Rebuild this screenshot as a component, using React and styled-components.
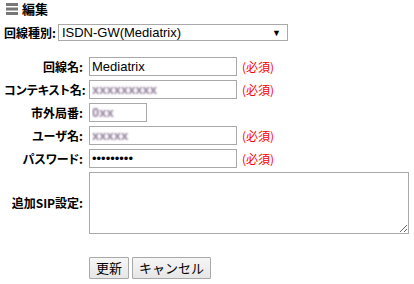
import React from 'react';
import styled, { createGlobalStyle } from 'styled-components';

const GlobalStyle = createGlobalStyle`
  body {
    margin: 0;
    background: #fff;
    font-family: "Noto Sans CJK JP", "Liberation Sans", sans-serif;
    font-feature-settings: "palt";
    color: #000;
  }
`;

const Page = styled.div`
  padding: 1px 4px 0;
`;

const Header = styled.div`
  display: flex;
  align-items: center;
  gap: 4px;
  height: 16px;
  padding-left: 2px;
`;

const Title = styled.span`
  font-size: 13px;
  font-weight: bold;
  line-height: 16px;
`;

const TypeRow = styled.div`
  display: flex;
  align-items: center;
  gap: 2px;
  margin-top: 7px;
`;

const Label = styled.label`
  font-size: 12px;
  font-weight: bold;
  line-height: 16px;
  white-space: nowrap;
  text-align: ${props => (props.right ? 'right' : 'left')};
`;

const Select = styled.div`
  box-sizing: border-box;
  width: 230px;
  height: 17px;
  border: 1px solid #a9a9a9;
  display: flex;
  align-items: center;
  justify-content: space-between;
  padding: 0 6px 0 3px;
  font-family: "Liberation Sans", Arial, sans-serif;
  font-size: 13px;
  background: #fff;
`;

const Arrow = styled.span`
  font-size: 9px;
`;

const Form = styled.div`
  display: grid;
  grid-template-columns: 79px auto;
  column-gap: 6px;
  row-gap: 4px;
  margin-top: 16px;
  align-items: center;
`;

const Field = styled.div`
  display: flex;
  align-items: center;
  gap: 5px;
`;

const Input = styled.input`
  box-sizing: border-box;
  width: ${props => props.w}px;
  height: 19px;
  margin: 0;
  border: 1px solid #a9a9a9;
  padding: 0 2px;
  font-family: "Liberation Sans", Arial, sans-serif;
  font-size: 13px;
  color: #000;
  outline: none;
`;

const MaskedInput = styled(Input)`
  color: transparent;
  text-shadow: 0 0 2px rgba(140, 120, 150, 0.95);
  font-weight: bold;
`;

const Required = styled.span`
  font-size: 12px;
  color: #f00;
  line-height: 16px;
`;

const TextArea = styled.textarea`
  box-sizing: border-box;
  width: 320px;
  height: 62px;
  margin: 0;
  border: 1px solid #a9a9a9;
  font-family: "Liberation Mono", monospace;
  font-size: 13px;
  outline: none;
`;

const Buttons = styled.div`
  display: flex;
  gap: 3px;
  margin-top: 19px;
`;

const Button = styled.button`
  box-sizing: border-box;
  height: 22px;
  margin: 0;
  padding: 0 ${props => props.pad}px;
  border: 1px solid #a9a9a9;
  border-radius: 1px;
  background: linear-gradient(#f6f6f6, #e6e6e6);
  font-family: "Noto Sans CJK JP", sans-serif;
  font-size: 13px;
  color: #000;
  line-height: 20px;
`;

const ListIcon = () => (
  <svg width="12" height="12" viewBox="0 0 12 12">
    <rect x="0" y="0" width="12" height="3" fill="#777" />
    <rect x="0" y="4.5" width="12" height="3" fill="#777" />
    <rect x="0" y="9" width="12" height="3" fill="#777" />
  </svg>
);

const fields = [
  { label: '回線名:', w: 148, value: 'Mediatrix', required: true },
  { label: 'コンテキスト名:', w: 148, value: 'xxxxxxxxx', masked: true, required: true },
  { label: '市外局番:', w: 58, value: '0xx', masked: true },
  { label: 'ユーザ名:', w: 148, value: 'xxxxx', masked: true, required: true },
  { label: 'パスワード:', w: 148, value: 'password1', type: 'password', required: true },
];

export default function App() {
  return (
    <Page>
      <GlobalStyle />
      <Header>
        <ListIcon />
        <Title>編集</Title>
      </Header>
      <TypeRow>
        <Label>回線種別:</Label>
        <Select>
          <span>ISDN-GW(Mediatrix)</span>
          <Arrow>▼</Arrow>
        </Select>
      </TypeRow>
      <Form>
        {fields.map(f => (
          <React.Fragment key={f.label}>
            <Label right>{f.label}</Label>
            <Field>
              {f.masked ? (
                <MaskedInput w={f.w} defaultValue={f.value} />
              ) : (
                <Input w={f.w} type={f.type || 'text'} defaultValue={f.value} />
              )}
              {f.required && <Required>(必須)</Required>}
            </Field>
          </React.Fragment>
        ))}
        <Label right>追加SIP設定:</Label>
        <TextArea />
        <span />
        <Buttons>
          <Button pad={6}>更新</Button>
          <Button pad={6}>キャンセル</Button>
        </Buttons>
      </Form>
    </Page>
  );
}
